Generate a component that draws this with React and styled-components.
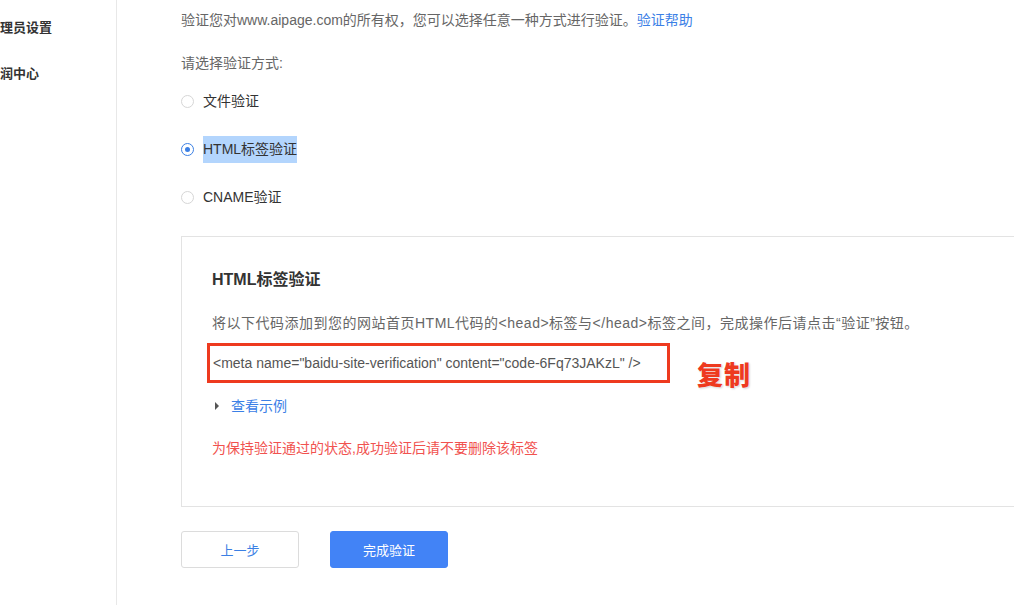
import styled, { createGlobalStyle } from 'styled-components';

const GlobalStyle = createGlobalStyle`
    html, body {
        margin: 0;
        padding: 0;
        background: #fff;
        overflow: hidden;
    }
    body {
        font-family: "Liberation Sans", "Noto Sans CJK SC", sans-serif;
        color: #666;
    }
`;

// the sidebar is scrolled off to the left in the screenshot, only these parts show
const sideItems = ['理员设置', '润中心'];
const methods = [
    { label: '文件验证', checked: false },
    { label: 'HTML标签验证', checked: true },
    { label: 'CNAME验证', checked: false },
];

export default function App() {
    return (
        <Page>
            <GlobalStyle />
            <Sidebar>
                {sideItems.map((item) => (
                    <SideItem key={item}>{item}</SideItem>
                ))}
            </Sidebar>
            <Main>
                <Intro>
                    验证您对www.aipage.com的所有权，您可以选择任意一种方式进行验证。<Link>验证帮助</Link>
                </Intro>
                <Prompt>请选择验证方式:</Prompt>
                <RadioList>
                    {methods.map((m) => (
                        <RadioRow key={m.label}>
                            <RadioCircle $checked={m.checked} />
                            <RadioLabel $selected={m.checked}>{m.label}</RadioLabel>
                        </RadioRow>
                    ))}
                </RadioList>
                <Card>
                    <CardTitle>HTML标签验证</CardTitle>
                    <Desc>将以下代码添加到您的网站首页HTML代码的&lt;head&gt;标签与&lt;/head&gt;标签之间，完成操作后请点击“验证”按钮。</Desc>
                    <CodeRow>
                        <CodeBox>&lt;meta name="baidu-site-verification" content="code-6Fq73JAKzL" /&gt;</CodeBox>
                        <CopyNote>复制</CopyNote>
                    </CodeRow>
                    <Example>
                        <Caret />
                        <Link>查看示例</Link>
                    </Example>
                    <Warning>为保持验证通过的状态,成功验证后请不要删除该标签</Warning>
                </Card>
                <Actions>
                    <Button>上一步</Button>
                    <Button $primary>完成验证</Button>
                </Actions>
            </Main>
        </Page>
    );
}

const Page = styled.div`
    display: flex;
    width: 1014px;
    height: 605px;
    overflow: hidden;
`;

const Sidebar = styled.div`
    width: 116px;
    flex-shrink: 0;
    border-right: 1px solid #e8e8e8;
    padding-top: 18px;
    display: flex;
    flex-direction: column;
    gap: 26px;
`;

const SideItem = styled.div`
    font-size: 13px;
    line-height: 20px;
    font-weight: 600;
    color: #333;
    white-space: nowrap;
`;

const Main = styled.div`
    flex: 1;
    padding-left: 64px;
    display: flex;
    flex-direction: column;
    min-width: 0;
`;

const Intro = styled.div`
    margin-top: 10px;
    font-size: 14px;
    line-height: 20px;
    color: #666;
    white-space: nowrap;
`;

const Link = styled.span`
    color: #3b80e6;
    cursor: pointer;
`;

const Prompt = styled.div`
    margin-top: 23px;
    font-size: 14px;
    line-height: 20px;
    color: #666;
`;

const RadioList = styled.div`
    margin-top: 4px;
    display: flex;
    flex-direction: column;
`;

const RadioRow = styled.div`
    height: 48px;
    display: flex;
    align-items: center;
`;

const RadioCircle = styled.span`
    width: 11px;
    height: 11px;
    border-radius: 50%;
    border: 1px solid ${(p) => (p.$checked ? '#3b7fe4' : '#d6d6d6')};
    margin-right: 9px;
    position: relative;
    flex-shrink: 0;
    &::after {
        content: '';
        display: ${(p) => (p.$checked ? 'block' : 'none')};
        position: absolute;
        left: 3px;
        top: 3px;
        width: 5px;
        height: 5px;
        border-radius: 50%;
        background: #3b7fe4;
    }
`;

const RadioLabel = styled.span`
    font-size: 14px;
    line-height: 27px;
    color: #333;
    background: ${(p) => (p.$selected ? '#b3d5fd' : 'transparent')};
`;

const Card = styled.div`
    margin-top: 15px;
    border: 1px solid #e3e3e3;
    border-right: none;
    padding: 32px 0 48px 30px;
    display: flex;
    flex-direction: column;
`;

const CardTitle = styled.div`
    font-size: 16px;
    line-height: 22px;
    font-weight: 700;
    color: #333;
`;

const Desc = styled.div`
    margin-top: 22px;
    font-size: 14px;
    line-height: 20px;
    letter-spacing: 0.5px;
    color: #666;
    white-space: nowrap;
`;

const CodeRow = styled.div`
    margin-top: 10px;
    margin-left: -5px;
    display: flex;
    align-items: flex-start;
`;

const CodeBox = styled.div`
    width: 454px;
    height: 34px;
    border: 3px solid #ee3a1f;
    padding-left: 3px;
    font-size: 14px;
    line-height: 34px;
    color: #555;
    white-space: nowrap;
`;

const CopyNote = styled.div`
    margin-left: 27px;
    margin-top: 16px;
    font-size: 26px;
    line-height: 30px;
    font-weight: 900;
    color: #ee3a1f;
    letter-spacing: 1px;
    font-family: "Noto Sans CJK SC", sans-serif;
    text-shadow: 0 0 2px #fff, 1px 1px 2px rgba(0, 0, 0, 0.2);
`;

const Example = styled.div`
    margin-top: 7px;
    margin-left: 3px;
    display: flex;
    align-items: center;
    font-size: 14px;
    line-height: 20px;
`;

const Caret = styled.span`
    width: 0;
    height: 0;
    border-top: 4px solid transparent;
    border-bottom: 4px solid transparent;
    border-left: 4px solid #555;
    margin-right: 12px;
`;

const Warning = styled.div`
    margin-top: 22px;
    font-size: 14px;
    line-height: 20px;
    color: #f1524f;
`;

const Actions = styled.div`
    margin-top: 24px;
    display: flex;
    gap: 31px;
`;

const Button = styled.button`
    width: 118px;
    height: 37px;
    border-radius: 3px;
    border: 1px solid ${(p) => (p.$primary ? '#4283f6' : '#dcdcdc')};
    background: ${(p) => (p.$primary ? '#4283f6' : '#fff')};
    color: ${(p) => (p.$primary ? '#fff' : '#3b7fe4')};
    font-family: "Liberation Sans", "Noto Sans CJK SC", sans-serif;
    font-size: 13px;
    cursor: pointer;
    padding: 0;
`;
